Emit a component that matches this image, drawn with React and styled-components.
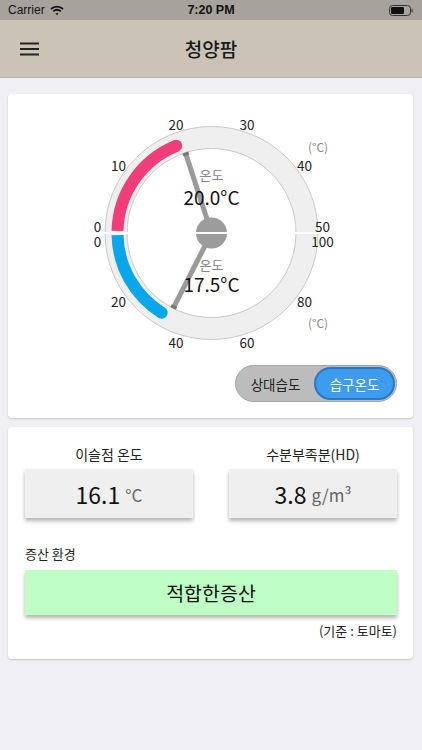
import styled, { createGlobalStyle } from "styled-components";

const GlobalStyle = createGlobalStyle`
  body {
    margin: 0;
    background: #efeff4;
    font-family: "Noto Sans CJK KR", "Noto Sans", sans-serif;
    color: #111;
  }
`;

const Page = styled.div`
  width: 422px;
  min-height: 750px;
  background: #efeff4;
`;

const StatusBar = styled.div`
  height: 20px;
  background: #a7a29b;
  display: flex;
  align-items: center;
  justify-content: space-between;
  padding: 0 9px 0 8px;
  font-family: "Liberation Sans", sans-serif;
  font-size: 12px;
  position: relative;
`;

const Carrier = styled.div`
  display: flex;
  align-items: center;
  gap: 5px;
`;

const Clock = styled.div`
  position: absolute;
  left: 0;
  right: 0;
  text-align: center;
  font-weight: bold;
  font-size: 12.5px;
`;

const NavBar = styled.div`
  height: 57px;
  background: #cbc4b6;
  border-bottom: 1px solid #bdb6a9;
  display: flex;
  align-items: center;
  position: relative;
  padding-left: 20px;
`;

const Title = styled.div`
  position: absolute;
  left: 0;
  right: 0;
  text-align: center;
  font-size: 19px;
  font-weight: 500;
  color: #1a1a1a;
`;

const Content = styled.div`
  padding: 16px 9px 0 8px;
  display: flex;
  flex-direction: column;
  gap: 9px;
`;

const Card = styled.div`
  background: #fff;
  border-radius: 4px;
  box-shadow: 0 1px 2px rgba(0, 0, 0, 0.18);
  padding: ${(p) => p.$pad || "0"};
`;

const ToggleRow = styled.div`
  display: flex;
  justify-content: flex-end;
  padding: 3px 16px 16px 0;
`;

const Toggle = styled.div`
  width: 162px;
  height: 37px;
  box-sizing: border-box;
  border-radius: 19px;
  background: #bcbcbc;
  border: 1px solid #a5a5a5;
  display: flex;
  align-items: center;
  padding: 1px;
`;

const ToggleItem = styled.div`
  flex: 1;
  height: 100%;
  box-sizing: border-box;
  border-radius: 18px;
  display: flex;
  align-items: center;
  justify-content: center;
  font-size: 13.5px;
  color: ${(p) => (p.$active ? "#fff" : "#222")};
  background: ${(p) => (p.$active ? "#3d9cec" : "transparent")};
  border: ${(p) => (p.$active ? "2px solid #2a78c8" : "none")};
`;

const Grid = styled.div`
  display: grid;
  grid-template-columns: 1fr 1fr;
  column-gap: 36px;
`;

const Field = styled.div`
  display: flex;
  flex-direction: column;
  align-items: center;
`;

const FieldLabel = styled.div`
  font-size: 14px;
  line-height: 20px;
  color: #222;
  margin-bottom: 5px;
`;

const ValueBox = styled.div`
  width: 100%;
  height: 49px;
  background: #efefef;
  box-shadow: 0 3px 4px rgba(0, 0, 0, 0.3);
  display: flex;
  align-items: center;
  justify-content: center;
  gap: 5px;
`;

const Big = styled.span`
  font-size: 23px;
  color: #111;
`;

const Unit = styled.span`
  font-size: 17px;
  color: #666;
  margin-top: 2px;
`;

const SectionLabel = styled.div`
  font-size: 13px;
  line-height: 18px;
  margin: 27px 0 7px;
  color: #222;
`;

const StatusBox = styled.div`
  height: 45px;
  background: #bfffc5;
  box-shadow: 0 3px 4px rgba(0, 0, 0, 0.3);
  display: flex;
  align-items: center;
  justify-content: center;
  font-size: 19.5px;
  color: #111;
`;

const Note = styled.div`
  text-align: right;
  font-size: 13px;
  line-height: 18px;
  margin-top: 7px;
  color: #222;
`;

const CX = 203.5;
const CY = 139;
const R_OUT = 106.5;
const R_IN = 84.5;
const R_BAR = 94;
const deg = (d) => (d * Math.PI) / 180;

// upper half: t goes from left over the top; lower: from left under the bottom
const pt = (t, r, up) => [
  CX - r * Math.cos(deg(t)),
  up ? CY - r * Math.sin(deg(t)) : CY + r * Math.sin(deg(t)),
];

const arcPath = (t0, t1, r, up) => {
  const [x0, y0] = pt(t0, r, up);
  const [x1, y1] = pt(t1, r, up);
  return `M ${x0} ${y0} A ${r} ${r} 0 0 ${up ? 1 : 0} ${x1} ${y1}`;
};

const upperTicks = [
  { v: "10", t: 36 },
  { v: "20", t: 72 },
  { v: "30", t: 108 },
  { v: "40", t: 144 },
];
const lowerTicks = [
  { v: "20", t: 36 },
  { v: "40", t: 72 },
  { v: "60", t: 108 },
  { v: "80", t: 144 },
];

const Pointer = ({ t, up }) => {
  const [x, y] = pt(t, R_IN, up);
  const [xe, ye] = pt(t, R_IN - 3, up);
  return (
    <g>
      <line x1={CX} y1={CY} x2={x} y2={y} stroke="#9a9a9a" strokeWidth="5" />
      <line x1={xe} y1={ye} x2={x} y2={y} stroke="#777" strokeWidth="6" />
    </g>
  );
};

const Bar = ({ t0, t1, up, color }) => {
  const [x, y] = pt(t1, R_BAR, up);
  return (
    <g>
      <path d={arcPath(t0, t1, R_BAR, up)} fill="none" stroke={color} strokeWidth="12" />
      <circle cx={x} cy={y} r="6" fill={color} />
    </g>
  );
};

const Gauge = () => (
  <svg width="405" height="268" style={{ display: "block" }}>
    <g fontFamily='"Noto Sans CJK KR", "Noto Sans", sans-serif'>
      <circle cx={CX} cy={CY} r={(R_OUT + R_IN) / 2} fill="none" stroke="#efefef" strokeWidth={R_OUT - R_IN} />
      <circle cx={CX} cy={CY} r={R_OUT} fill="none" stroke="#c9c9c9" strokeWidth="1" />
      <circle cx={CX} cy={CY} r={R_IN} fill="none" stroke="#c9c9c9" strokeWidth="1" />

      <Bar t0={1.3} t1={68} up color="#f23d7b" />
      <Bar t0={1.3} t1={58} up={false} color="#0aa6ea" />

      <Pointer t={72} up />
      <Pointer t={63} up={false} />

      <circle cx={CX} cy={CY} r="15.5" fill="#9c9c9c" />
      <rect x={CX - 108} y={CY - 1} width="216" height="2" fill="#fff" />

      <g fontSize="13.5" fill="#222" textAnchor="middle" dominantBaseline="central">
        {upperTicks.map((k) => {
          const [x, y] = pt(k.t, 115, true);
          return (
            <text key={"u" + k.v} x={x} y={y}>
              {k.v}
            </text>
          );
        })}
        {lowerTicks.map((k) => {
          const [x, y] = pt(k.t, 115, false);
          return (
            <text key={"l" + k.v} x={x} y={y}>
              {k.v}
            </text>
          );
        })}
        <text x={CX - 114} y={CY - 7}>0</text>
        <text x={CX - 114} y={CY + 8}>0</text>
        <text x={CX + 111} y={CY - 7}>50</text>
        <text x={CX + 111} y={CY + 8}>100</text>
      </g>

      <g fontSize="12" fill="#888" textAnchor="middle" dominantBaseline="central">
        <text x="310" y="52">(°C)</text>
        <text x="310" y="228">(°C)</text>
      </g>

      <g textAnchor="middle" dominantBaseline="central">
        <text x={CX} y="80" fontSize="13" fill="#888">온도</text>
        <text x={CX} y="102" fontSize="19" fill="#111">20.0°C</text>
        <text x={CX} y="170" fontSize="13" fill="#888">온도</text>
        <text x={CX} y="189" fontSize="19" fill="#111">17.5°C</text>
      </g>
    </g>
  </svg>
);

const Wifi = () => (
  <svg width="14" height="11" viewBox="0 0 14 11">
    <path d="M1 4 A9 9 0 0 1 13 4" fill="none" stroke="#111" strokeWidth="1.8" />
    <path d="M3.3 6.3 A5.8 5.8 0 0 1 10.7 6.3" fill="none" stroke="#111" strokeWidth="1.8" />
    <path d="M5.5 8.6 L7 10.3 L8.5 8.6 A2.2 2.2 0 0 0 5.5 8.6 Z" fill="#111" />
  </svg>
);

const Battery = () => (
  <svg width="24" height="11" viewBox="0 0 24 11">
    <rect x="0.5" y="0.5" width="21" height="10" rx="3" fill="none" stroke="#333" strokeWidth="1" />
    <rect x="2" y="2" width="13" height="7" rx="1.2" fill="#111" />
    <rect x="22.5" y="3.5" width="1.3" height="4" rx="0.6" fill="#555" />
  </svg>
);

const Hamburger = () => (
  <svg width="19" height="14" viewBox="0 0 19 14">
    <rect x="0" y="0.5" width="19" height="2" fill="#222" />
    <rect x="0" y="6" width="19" height="2" fill="#222" />
    <rect x="0" y="11.5" width="19" height="2" fill="#222" />
  </svg>
);

const App = () => (
  <Page>
    <GlobalStyle />
    <StatusBar>
      <Carrier>
        Carrier <Wifi />
      </Carrier>
      <Clock>7:20 PM</Clock>
      <Battery />
    </StatusBar>
    <NavBar>
      <Hamburger />
      <Title>청양팜</Title>
    </NavBar>
    <Content>
      <Card>
        <Gauge />
        <ToggleRow>
          <Toggle>
            <ToggleItem>상대습도</ToggleItem>
            <ToggleItem $active>습구온도</ToggleItem>
          </Toggle>
        </ToggleRow>
      </Card>
      <Card $pad="17px 16px 19px 17px">
        <Grid>
          <Field>
            <FieldLabel>이슬점 온도</FieldLabel>
            <ValueBox>
              <Big>16.1</Big>
              <Unit>°C</Unit>
            </ValueBox>
          </Field>
          <Field>
            <FieldLabel>수분부족분(HD)</FieldLabel>
            <ValueBox>
              <Big>3.8</Big>
              <Unit>g/m³</Unit>
            </ValueBox>
          </Field>
        </Grid>
        <SectionLabel>증산 환경</SectionLabel>
        <StatusBox>적합한증산</StatusBox>
        <Note>(기준 : 토마토)</Note>
      </Card>
    </Content>
  </Page>
);

export default App;
